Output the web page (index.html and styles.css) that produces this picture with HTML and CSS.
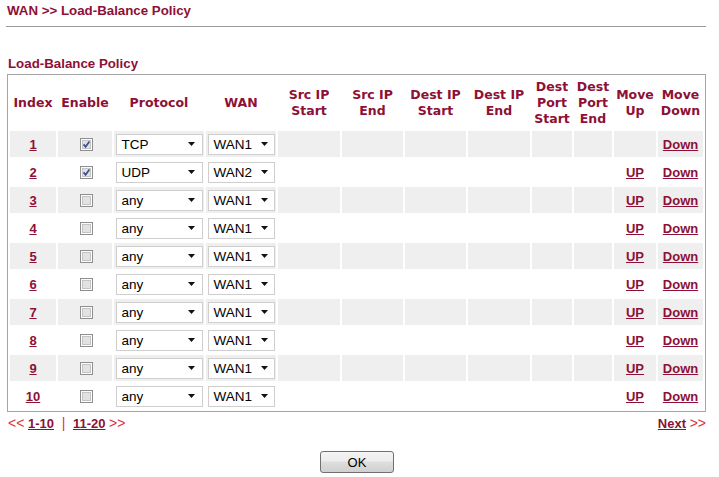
FILE: index.html
```html
<!DOCTYPE html>
<html>
<head>
<meta charset="utf-8">
<link rel="stylesheet" href="styles.css">
</head>
<body>
<div class="page">
  <div class="title">WAN &gt;&gt; Load-Balance Policy</div>
  <div class="rule"></div>
  <div class="section-title">Load-Balance Policy</div>
  <table class="policy">
    <colgroup>
      <col class="c-index"><col class="c-enable"><col class="c-proto"><col class="c-wan">
      <col class="c-ip1"><col class="c-ip2"><col class="c-ip3"><col class="c-ip4">
      <col class="c-p1"><col class="c-p2"><col class="c-up"><col class="c-down">
    </colgroup>
    <thead>
      <tr>
        <th>Index</th><th>Enable</th><th>Protocol</th><th>WAN</th>
        <th>Src IP<br>Start</th><th>Src IP<br>End</th><th>Dest IP<br>Start</th><th>Dest IP<br>End</th>
        <th>Dest<br>Port<br>Start</th><th>Dest<br>Port<br>End</th><th>Move<br>Up</th><th>Move<br>Down</th>
      </tr>
    </thead>
    <tbody id="rows"></tbody>
  </table>
  <div class="pager">
    <div class="pages"><span class="arrow">&lt;&lt;</span> <a href="#">1-10</a> <span class="sep">|</span> <a href="#">11-20</a> <span class="arrow">&gt;&gt;</span></div>
    <div class="next"><a href="#">Next</a> <span class="arrow">&gt;&gt;</span></div>
  </div>
  <div class="actions"><button class="ok">OK</button></div>
</div>
<script src="app.js"></script>
</body>
</html>
```
FILE: app.js
```js
var data = [
  [1, true, 'TCP', 'WAN1'],
  [2, true, 'UDP', 'WAN2'],
  [3, false, 'any', 'WAN1'],
  [4, false, 'any', 'WAN1'],
  [5, false, 'any', 'WAN1'],
  [6, false, 'any', 'WAN1'],
  [7, false, 'any', 'WAN1'],
  [8, false, 'any', 'WAN1'],
  [9, false, 'any', 'WAN1'],
  [10, false, 'any', 'WAN1']
];
var arrow = '<svg class="arr" width="7" height="4" viewBox="0 0 7 4"><path d="M0 0H7L3.5 4Z" fill="#111"/></svg>';
function box(checked) {
  var s = '<svg class="cb" width="13" height="13" viewBox="0 0 13 13">' +
    '<rect x="0.5" y="0.5" width="12" height="12" fill="#fdfdfd" stroke="#8e8f8f"/>' +
    '<rect x="2.5" y="2.5" width="8" height="8" fill="#e2e2e2" stroke="#c4c4c4"/>';
  if (checked) {
    s += '<path d="M3.6 6.4 L5.6 8.8 L9.4 3.6" fill="none" stroke="#3b4f8c" stroke-width="1.7"/>';
  }
  return s + '</svg>';
}
var html = '';
data.forEach(function (r) {
  var i = r[0];
  html += '<tr' + (i % 2 ? ' class="odd"' : '') + '>' +
    '<td><a href="#">' + i + '</a></td>' +
    '<td>' + box(r[1]) + '</td>' +
    '<td><div class="select proto"><span>' + r[2] + '</span>' + arrow + '</div></td>' +
    '<td><div class="select wan"><span>' + r[3] + '</span>' + arrow + '</div></td>' +
    '<td></td><td></td><td></td><td></td><td></td><td></td>' +
    '<td>' + (i > 1 ? '<a href="#">UP</a>' : '') + '</td>' +
    '<td><a href="#">Down</a></td>' +
    '</tr>';
});
document.getElementById('rows').innerHTML = html;
```
FILE: styles.css
```css
html, body {
  margin: 0;
  padding: 0;
  background: #fff;
}
body {
  font-family: "Liberation Sans", Arial, sans-serif;
  font-size: 13px;
  color: #000;
}
.page {
  width: 699px;
  padding-left: 7px;
}
.title {
  margin-top: 3px;
  font-weight: bold;
  font-size: 13.3px;
  line-height: 15px;
  color: #8d1036;
}
.rule {
  margin-top: 8px;
  width: 700px;
  margin-left: -1px;
  height: 1px;
  background: #9a9a9a;
}
.section-title {
  margin-top: 29px;
  margin-left: 1px;
  font-weight: bold;
  font-size: 13.3px;
  line-height: 15px;
  color: #8d1036;
}
.policy {
  margin-top: 3px;
  width: 699px;
  table-layout: fixed;
  border-collapse: separate;
  border-spacing: 2px;
  border: 1px solid #a5a5a5;
}
.c-index { width: 46px; }
.c-enable { width: 54px; }
.c-proto { width: 90px; }
.c-wan { width: 70px; }
.c-ip1 { width: 62px; }
.c-ip2 { width: 61px; }
.c-ip3 { width: 61px; }
.c-ip4 { width: 62px; }
.c-p1 { width: 40px; }
.c-p2 { width: 38px; }
.c-up { width: 42px; }
.c-down { width: 45px; }
.policy th {
  height: 52px;
  padding: 0;
  font-family: "DejaVu Sans", Verdana, sans-serif;
  font-weight: bold;
  font-size: 12.5px;
  line-height: 16px;
  color: #8d1036;
  text-align: center;
  vertical-align: middle;
  white-space: nowrap;
}
.policy td {
  height: 26px;
  padding: 0;
  text-align: center;
  vertical-align: middle;
}
.policy tr.odd td {
  background: #efefef;
}
.policy a {
  font-weight: bold;
  font-size: 13px;
  color: #8d1036;
  text-decoration: underline;
}
.cb {
  display: block;
  margin: 0 auto;
  position: relative;
  left: 1px;
}
.select {
  box-sizing: border-box;
  height: 21px;
  margin: 0 auto;
  display: flex;
  align-items: center;
  justify-content: space-between;
  background: #fff;
  border: 1px solid #cfcfcf;
  padding: 0 7px 0 5px;
  font-size: 13.5px;
  color: #000;
  text-align: left;
}
.select.proto {
  width: 87px;
}
.select.wan {
  width: 67px;
  padding-right: 6px;
}
.pager {
  display: flex;
  justify-content: space-between;
  margin-top: 3px;
  line-height: 16px;
  font-size: 13px;
}
.pages {
  padding-left: 1px;
}
.pager a {
  font-weight: bold;
  color: #8d1036;
  text-decoration: underline;
}
.pager .arrow, .pager .sep {
  color: #e0303c;
  font-size: 14px;
}
.pages .sep {
  margin: 0 4px;
}
.actions {
  display: flex;
  justify-content: center;
  margin-top: 19px;
}
.ok {
  width: 74px;
  height: 22px;
  padding: 0;
  margin-left: 1px;
  border: 1px solid #707070;
  border-radius: 3px;
  background: linear-gradient(#f4f4f4, #ececec 45%, #dedede 50%, #d0d0d0);
  font-family: "Liberation Sans", Arial, sans-serif;
  font-size: 13px;
  color: #000;
}
```
